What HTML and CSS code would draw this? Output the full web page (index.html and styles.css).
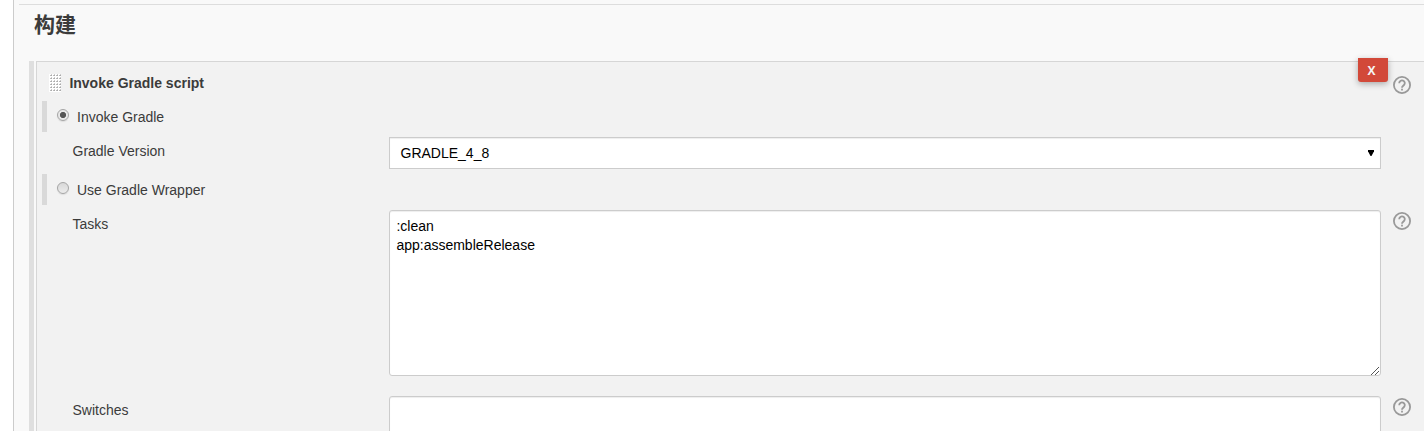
FILE: index.html
```html
<!DOCTYPE html>
<html lang="zh-CN">
<head>
<meta charset="utf-8">
<title>构建</title>
<link rel="stylesheet" href="styles.css">
</head>
<body>
<svg class="defs" aria-hidden="true">
  <symbol id="help" viewBox="0 0 18 18">
    <circle cx="9" cy="9" r="8.1" fill="none" stroke="#999" stroke-width="1.8"/>
    <path d="M6.2 7.2a2.8 2.7 0 1 1 4.8 1.8C10 10 9 10.2 9 11.8" fill="none" stroke="#999" stroke-width="1.8"/>
    <rect x="8.1" y="12.7" width="1.8" height="1.8" fill="#999"/>
  </symbol>
</svg>
<main class="config">
  <h2 class="section-title">构建</h2>
  <div class="builder">
    <section class="panel">
      <button class="delete">X</button>
      <header class="row head">
        <div class="name"><svg class="handle" viewBox="0 0 12 18"><defs><pattern id="dots" width="3" height="3" patternUnits="userSpaceOnUse"><path d="M1 1h1v1H1z" fill="#bbb"/><path d="M2 1h1v1H2z" fill="#aaa"/><path d="M2 0h1v1H2z" fill="#ccc"/></pattern></defs><path d="M0 0h12v18H0z" fill="#fff"/><path d="M0 0h12v18H0z" fill="url(#dots)"/></svg><b>Invoke Gradle script</b></div>
        <svg class="help"><use href="#help"/></svg>
      </header>
      <label class="option"><span class="radio checked"></span>Invoke Gradle</label>
      <div class="row version">
        <span class="label">Gradle Version</span>
        <div class="field select">GRADLE_4_8<svg class="arrow" viewBox="0 0 6 6"><path d="M0 0h6v1.2L3.5 6h-1L0 1.2z"/></svg></div>
      </div>
      <label class="option"><span class="radio"></span>Use Gradle Wrapper</label>
      <div class="row tasks">
        <span class="label">Tasks</span>
        <div class="field area">:clean<br>app:assembleRelease<svg class="grip" viewBox="0 0 9 9" shape-rendering="crispEdges"><path d="M0 8h1v1H0zM1 7h1v1H1zM2 6h1v1H2zM3 5h1v1H3zM4 4h1v1H4zM5 3h1v1H5zM6 2h1v1H6zM7 1h1v1H7zM4 8h1v1H4zM5 7h1v1H5zM6 6h1v1H6zM7 5h1v1H7z" fill="#555"/></svg></div>
        <svg class="help"><use href="#help"/></svg>
      </div>
      <div class="row switches">
        <span class="label">Switches</span>
        <div class="field area"></div>
        <svg class="help"><use href="#help"/></svg>
      </div>
    </section>
  </div>
</main>
</body>
</html>
```
FILE: styles.css
```css
* { box-sizing: border-box; }
body {
  margin: 0;
  height: 431px;
  overflow: hidden;
  background: #fff;
  color: #3b3b3b;
  font: 14px/19px "Liberation Sans", Arial, "Noto Sans CJK SC", sans-serif;
}
.defs { position: absolute; width: 0; height: 0; }
.config {
  margin-left: 13px;
  height: 431px;
  padding: 4px 0 0 5px;
  border-left: 1px solid #ccc;
  background: #f9f9f9;
  overflow: hidden;
}
.section-title {
  margin: 0;
  height: 57px;
  padding: 3px 0 0 15px;
  border-top: 1px solid #ddd;
  font: bold 21px/30px "Noto Sans CJK SC", sans-serif;
}
.builder {
  margin-left: 10px;
  padding-left: 2px;
  border-left: 5px solid #dfdfdf;
}
.panel {
  position: relative;
  height: 400px;
  padding-left: 5px;
  border: solid #d6d6d6;
  border-width: 1px 0 0 1px;
  background: #f2f2f2;
}
.delete {
  position: absolute;
  top: -4px;
  right: 36px;
  width: 30px;
  height: 24px;
  padding: 0 3px 0 0;
  border: 0;
  border-radius: 0 0 3px 3px;
  background: #d24939;
  box-shadow: 0 2px 6px rgba(0, 0, 0, .3);
  color: #f5f5f5;
  font: bold 12px/23px "Open Sans", Arial, sans-serif;
}
.row {
  display: grid;
  grid-template-columns: 347px 992px 30px;
  align-items: start;
}
.row .help { grid-column: 3; margin-left: 12px; width: 18px; height: 18px; }
.head { height: 39px; }
.head .help { margin-top: 14px; }
.name { display: flex; align-items: flex-start; padding: 12px 0 0 7px; }
.name b { margin-left: 8.4px; }
.handle { width: 12px; height: 18px; }
.option {
  display: flex;
  height: 31px;
  padding: 7px 0 0 10px;
  border-left: 5px solid #d9d9d9;
}
.radio {
  width: 12px;
  height: 12px;
  margin: 1px 8px 0 0;
  border: 1px solid #a5a5a5;
  border-radius: 50%;
  background: linear-gradient(#d8d8d8, #ececec);
  box-shadow: 0 1px 1px #ddd;
}
.checked { background: radial-gradient(circle, #555 0 2.7px, #e8e8e8 3.5px); }
.label { padding: 10px 0 0 30.5px; }
.field { margin-top: 5px; border: 1px solid #ccc; background: #fff; color: #000; }
.version { height: 42px; }
.select {
  display: flex;
  align-items: center;
  justify-content: space-between;
  height: 32px;
  padding: 0 6px 0 10.5px;
  box-shadow: inset 0 1px 1px #eee;
}
.arrow { width: 6px; height: 6px; }
.area {
  position: relative;
  height: 166px;
  padding: 6px 6.4px;
  border-radius: 3px;
  box-shadow: inset 0 1px 1px #eee;
}
.grip { position: absolute; right: 0; bottom: 0; width: 9px; height: 9px; }
.tasks { height: 186px; }
.tasks .help, .switches .help { margin-top: 7px; }
```
